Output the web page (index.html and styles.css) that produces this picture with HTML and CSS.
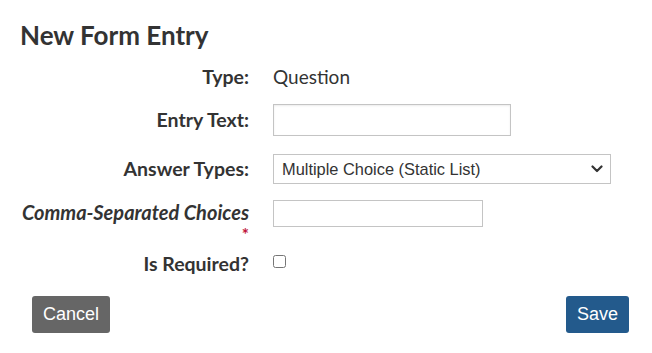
FILE: index.html
```html
<!DOCTYPE html>
<html lang="en">
<head>
    <meta charset="UTF-8">
    <meta name="viewport" content="width=device-width, initial-scale=1.0">
    <title>New Form Entry</title>
    <link rel="stylesheet" href="styles.css">
</head>
<body>
    <div class="modal">
        <h1>New Form Entry</h1>

        <div class="form">
            <div class="row">
                <div class="label">Type:</div>
                <div class="value">Question</div>
            </div>
            <div class="row row-text">
                <label class="label" for="entryText">Entry Text:</label>
                <input type="text" id="entryText" class="input input-wide">
            </div>
            <div class="row row-select">
                <label class="label" for="answerType">Answer Types:</label>
                <select id="answerType" class="select">
                    <option>Multiple Choice (Static List)</option>
                </select>
            </div>
            <div class="row row-top">
                <label class="label label-italic" for="choices">Comma-Separated Choices<span class="required">*</span></label>
                <input type="text" id="choices" class="input input-small">
            </div>
            <div class="row row-last">
                <label class="label" for="isRequired">Is Required?</label>
                <input type="checkbox" id="isRequired" class="checkbox">
            </div>
        </div>

        <div class="actions">
            <button class="btn btn-cancel">Cancel</button>
            <button class="btn btn-save">Save</button>
        </div>
    </div>
</body>
</html>
```

FILE: styles.css
```css
:root {
    --text: #333333;
    --border: #c4c4c4;
    --cancel: #666666;
    --save: #235a8c;
    --danger: #c0143c;
}

body {
    margin: 0;
    font-family: 'Lato', 'Liberation Sans', sans-serif;
    color: var(--text);
    background: white;
}

.modal {
    padding: 18px 23px 20px 20px;
}

h1 {
    font-size: 26px;
    font-weight: 700;
    margin: 0 0 13px;
    line-height: 34px;
}

.row {
    display: grid;
    grid-template-columns: 229px 1fr;
    column-gap: 24px;
    align-items: center;
    margin-bottom: 15px;
}

.row-text {
    margin-bottom: 18px;
}

.row-select {
    margin-bottom: 16px;
}

.row-top {
    align-items: start;
    margin-bottom: 7px;
}

.row-last {
    margin-bottom: 20px;
}

.label {
    text-align: right;
    font-weight: 700;
    font-size: 19.5px;
    line-height: 24px;
}

.label-italic {
    font-style: italic;
    font-size: 20px;
}

.required {
    display: block;
    color: var(--danger);
    font-style: normal;
    font-size: 17px;
    line-height: 21px;
}

.value {
    font-size: 19px;
    line-height: 24px;
}

.input {
    font-family: 'Liberation Sans', Arial, sans-serif;
    font-size: 15px;
    border: 1px solid var(--border);
    padding: 4px 8px;
    box-sizing: border-box;
    margin: 0;
}

.input-wide {
    width: 238px;
    height: 32px;
    box-shadow: inset 0 1px 2px rgba(0, 0, 0, 0.08);
}

.input-small {
    width: 210px;
    height: 27px;
}

.select {
    appearance: none;
    -webkit-appearance: none;
    font-family: 'Liberation Sans', Arial, sans-serif;
    font-size: 16.4px;
    color: var(--text);
    width: 338px;
    height: 30px;
    border: 1px solid var(--border);
    border-radius: 0;
    padding: 0 30px 0 8px;
    background: white url("data:image/svg+xml,%3Csvg xmlns='http://www.w3.org/2000/svg' width='12' height='8' viewBox='0 0 12 8'%3E%3Cpath d='M1.5 1.5 6 6l4.5-4.5' fill='none' stroke='%23333' stroke-width='2.2' stroke-linecap='round' stroke-linejoin='round'/%3E%3C/svg%3E") no-repeat right 7px center;
    margin: 0;
}

.checkbox {
    width: 13px;
    height: 13px;
    margin: 0;
    align-self: start;
    margin-top: 3px;
}

.actions {
    display: flex;
    justify-content: space-between;
    padding-left: 12px;
}

.btn {
    font-family: 'Liberation Sans', Arial, sans-serif;
    font-size: 18px;
    color: white;
    border: none;
    border-radius: 3px;
    height: 37px;
    padding: 0 11px;
    cursor: pointer;
}

.btn-cancel {
    background: var(--cancel);
}

.btn-save {
    background: var(--save);
}
```
